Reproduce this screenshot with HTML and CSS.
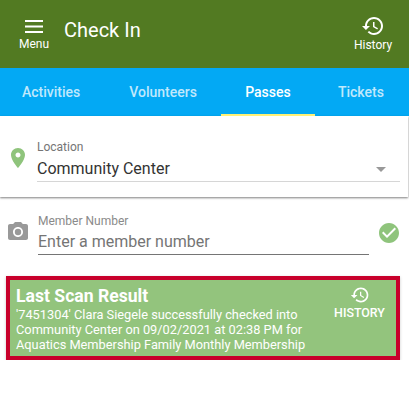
FILE: index.html
```html
<!DOCTYPE html>
<html lang="en">
<head>
    <meta charset="UTF-8">
    <meta name="viewport" content="width=device-width, initial-scale=1.0">
    <title>Check In</title>
    <link rel="stylesheet" href="styles.css">
</head>
<body>
    <header class="toolbar">
        <div class="tool-btn menu-btn">
            <svg class="menu-icon" viewBox="0 0 18 13"><path d="M0 0h18v2H0zM0 5.5h18v2H0zM0 11h18v2H0z"/></svg>
            <span>Menu</span>
        </div>
        <h1 class="title">Check In</h1>
        <div class="tool-btn history-btn">
            <svg class="history-icon" viewBox="0 0 24 24"><path d="M13 3c-4.97 0-9 4.03-9 9H1l3.89 3.89.07.14L9 12H6c0-3.87 3.13-7 7-7s7 3.13 7 7-3.13 7-7 7c-1.93 0-3.68-.79-4.94-2.06l-1.42 1.42C8.27 19.99 10.51 21 13 21c4.97 0 9-4.03 9-9s-4.03-9-9-9zm-1 5v5l4.28 2.54.72-1.21-3.5-2.08V8H12z"/></svg>
            <span>History</span>
        </div>
    </header>

    <nav class="tabs">
        <div class="tab tab-activities">Activities</div>
        <div class="tab tab-volunteers">Volunteers</div>
        <div class="tab tab-passes active">Passes</div>
        <div class="tab tab-tickets">Tickets</div>
    </nav>

    <section class="location-card">
        <svg class="pin-icon" viewBox="0 0 24 24"><path d="M12 2C8.13 2 5 5.13 5 9c0 5.25 7 13 7 13s7-7.75 7-13c0-3.87-3.13-7-7-7zm0 9.5c-1.38 0-2.5-1.12-2.5-2.5s1.12-2.5 2.5-2.5 2.5 1.12 2.5 2.5-1.12 2.5-2.5 2.5z"/></svg>
        <div class="select-field">
            <div class="field-label">Location</div>
            <div class="select-value">
                <span>Community Center</span>
                <i class="caret"></i>
            </div>
        </div>
    </section>

    <section class="member-row">
        <svg class="camera-icon" viewBox="0 0 24 24"><circle cx="12" cy="12" r="3.2"/><path d="M9 2L7.17 4H4c-1.1 0-2 .9-2 2v12c0 1.1.9 2 2 2h16c1.1 0 2-.9 2-2V6c0-1.1-.9-2-2-2h-3.17L15 2H9zm3 15c-2.76 0-5-2.24-5-5s2.24-5 5-5 5 2.24 5 5-2.24 5-5 5z"/></svg>
        <div class="input-field">
            <div class="field-label member-label">Member Number</div>
            <div class="placeholder">Enter a member number</div>
        </div>
        <svg class="check-icon" viewBox="0 0 24 24"><path d="M12 2C6.48 2 2 6.48 2 12s4.48 10 10 10 10-4.48 10-10S17.52 2 12 2zm-2 15l-5-5 1.41-1.41L10 14.17l7.59-7.59L19 8l-9 9z"/></svg>
    </section>

    <section class="result">
        <div class="result-text">
            <h2>Last Scan Result</h2>
            <p>'7451304' Clara Siegele successfully checked into Community Center on 09/02/2021 at 02:38 PM for Aquatics Membership Family Monthly Membership</p>
        </div>
        <div class="result-history">
            <svg class="history-icon small" viewBox="0 0 24 24"><path d="M13 3c-4.97 0-9 4.03-9 9H1l3.89 3.89.07.14L9 12H6c0-3.87 3.13-7 7-7s7 3.13 7 7-3.13 7-7 7c-1.93 0-3.68-.79-4.94-2.06l-1.42 1.42C8.27 19.99 10.51 21 13 21c4.97 0 9-4.03 9-9s-4.03-9-9-9zm-1 5v5l4.28 2.54.72-1.21-3.5-2.08V8H12z"/></svg>
            <span>HISTORY</span>
        </div>
    </section>
</body>
</html>
```

FILE: styles.css
```css
* {
    margin: 0;
    padding: 0;
    box-sizing: border-box;
}
body {
    font-family: Roboto, "Liberation Sans", sans-serif;
    background: #FFF;
    overflow: hidden;
}
.toolbar {
    display: flex;
    height: 68px;
    background: #527A22;
    color: #FFF;
    padding-top: 14px;
}
.tool-btn {
    display: flex;
    flex-direction: column;
    align-items: center;
    font-size: 12px;
    line-height: 14px;
}
.menu-btn {
    width: 68px;
    padding-top: 6px;
}
.menu-icon {
    width: 18px;
    height: 13px;
    fill: #FFF;
    margin-bottom: 4px;
}
.title {
    flex: 1;
    font-size: 20px;
    font-weight: 400;
    line-height: 28px;
    margin: 2px 0 0 -4px;
}
.history-btn {
    width: 40px;
    margin-right: 16px;
}
.history-icon {
    width: 24px;
    height: 24px;
    fill: #FFF;
}
.history-icon.small {
    width: 20px;
    height: 20px;
}
.tabs {
    display: flex;
    height: 48px;
    background: #03A9F4;
    margin-left: -2px;
}
.tab {
    padding: 0 24px;
    font-size: 14px;
    font-weight: 500;
    line-height: 48px;
    color: rgba(255, 255, 255, 0.75);
}
.tab-activities {
    padding-right: 25px;
}
.tab-passes {
    width: 94px;
    text-align: center;
    padding: 0;
}
.tab-tickets {
    padding-left: 23px;
}
.tab.active {
    color: #FFF;
    border-bottom: 2px solid #FFF176;
}
.location-card {
    display: flex;
    height: 81px;
    margin-right: 1px;
    padding: 22px 8px 0 6px;
    background: #FFF;
    box-shadow: 0 1px 2px rgba(0, 0, 0, 0.5);
}
.pin-icon {
    width: 24px;
    height: 24px;
    fill: #8FC47C;
    margin-top: 8px;
}
.select-field {
    flex: 1;
    height: 44px;
    margin-left: 7px;
    padding-top: 2px;
    border-bottom: 1px solid #D6D6D6;
}
.field-label {
    font-size: 12px;
    line-height: 14px;
    color: #757575;
}
.select-value {
    display: flex;
    align-items: center;
    justify-content: space-between;
    font-size: 16px;
    line-height: 24px;
    margin-top: 3px;
    color: #333;
}
.caret {
    width: 0;
    height: 0;
    margin-right: 14px;
    border-left: 5px solid transparent;
    border-right: 5px solid transparent;
    border-top: 5px solid #999;
}
.member-row {
    display: flex;
    height: 79px;
    padding: 17px 8px 0 6px;
}
.camera-icon {
    width: 24px;
    height: 24px;
    fill: #999;
    margin-top: 6px;
}
.input-field {
    flex: 1;
    height: 41px;
    margin: 0 8px;
    border-bottom: 1px solid #757575;
}
.member-label {
    color: #8A8A8A;
}
.placeholder {
    font-size: 16px;
    line-height: 24px;
    margin-top: 2px;
    color: #757575;
}
.check-icon {
    width: 24px;
    height: 24px;
    fill: #8FC47C;
    margin-top: 7px;
}
.result {
    display: flex;
    height: 84px;
    margin: 0 9px 0 6px;
    padding: 5px 0 0 6px;
    background: #93C47D;
    border: 4px solid #C8002B;
    box-shadow: 0 1px 3px rgba(0, 0, 0, 0.2);
    color: #FFF;
}
.result-text {
    width: 307px;
}
.result-text h2 {
    font-size: 17.6px;
    font-weight: 700;
    line-height: 22px;
}
.result-text p {
    font-size: 12.8px;
    line-height: 15px;
}
.result-history {
    display: flex;
    flex: 1;
    flex-direction: column;
    align-items: center;
    font-size: 12.4px;
    font-weight: 500;
    line-height: 16px;
}
```
